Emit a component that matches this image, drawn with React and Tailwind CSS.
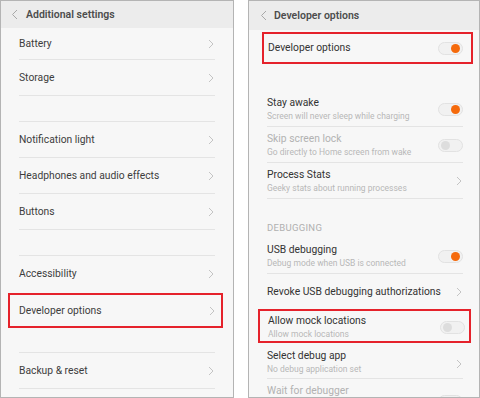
import React from 'react'

const font = { fontFamily: 'Roboto, "Noto Sans", sans-serif' }

const Chevron = ({ className = '' }) => (
    <svg width="6" height="10" viewBox="0 0 6 10" className={className}>
        <path d="M1 1 L5 5 L1 9" fill="none" stroke="#c4c4c4" strokeWidth="1" />
    </svg>
)

const Back = () => (
    <svg width="7" height="11" viewBox="0 0 7 11">
        <path d="M6 1 L1.5 5.5 L6 10" fill="none" stroke="#a8a8a8" strokeWidth="1" />
    </svg>
)

const Toggle = ({ on, className = '' }) => (
    <div className={`w-[25px] h-[13px] rounded-full bg-[#f1f1f1] border border-[#e2e2e2] flex items-center px-[2px] ${className}`}>
        <div className={on ? 'ml-auto w-[9px] h-[9px] rounded-full bg-[#f56a0c]' : 'w-[9px] h-[9px] rounded-full bg-[#dddddd]'}></div>
    </div>
)

const LeftRow = ({ label, h = 'h-[36px]', border = true, top = false }) => (
    <div className={`mx-[18px] flex items-center justify-between ${h} ${border ? 'border-b border-[#e4e4e4]' : ''} ${top ? 'border-t border-[#e4e4e4]' : ''}`}>
        <span className="text-[10.3px] text-[#3d3d3d]">{label}</span>
        <Chevron className="mr-[1px]" />
    </div>
)

const Sub = ({ title, sub, right, dim, border = true, pt = 'pt-[7px]' }) => (
    <div className={`h-[36px] flex justify-between ${pt} ${border ? 'border-b border-[#e4e4e4]' : ''}`}>
        <div className="flex flex-col leading-none">
            <span className={`text-[10.3px] h-[11px] ${dim ? 'text-[#b2b2b2]' : 'text-[#333333]'}`}>{title}</span>
            <span className="text-[8.5px] text-[#b8b8b8] mt-[3px]">{sub}</span>
        </div>
        <div className="self-center -mt-[6px]">{right}</div>
    </div>
)

const LeftPanel = () => (
    <div className="w-[234px] h-[398px] border border-[#b4b4b4] bg-[#f7f7f7] flex flex-col overflow-hidden">
        <div className="h-[27px] bg-[#ececec] flex items-center pl-[10px] gap-[8px]">
            <Back />
            <span className="text-[10.5px] font-semibold text-[#4d4d4d]">Additional settings</span>
        </div>
        <LeftRow label="Battery" h="h-[32px] pt-[1px]" />
        <LeftRow label="Storage" />
        <div className="h-[25px]"></div>
        <LeftRow label="Notification light" h="h-[37px]" top />
        <LeftRow label="Headphones and audio effects" />
        <LeftRow label="Buttons" />
        <div className="h-[25px]"></div>
        <LeftRow label="Accessibility" h="h-[37px]" top border={false} />
        <div className="ml-[7px] mr-[10px] mt-[1px] h-[35px] border-2 border-[#e5222b] flex items-center justify-between pl-[9px] pr-[6px]">
            <span className="text-[10.3px] text-[#3d3d3d]">Developer options</span>
            <Chevron />
        </div>
        <div className="h-[24px]"></div>
        <LeftRow label="Backup & reset" h="h-[37px] pt-[1px]" top />
    </div>
)

const RightPanel = () => (
    <div className="flex-1 h-[398px] border border-[#b4b4b4] bg-[#f7f7f7] flex flex-col overflow-hidden">
        <div className="h-[29px] shrink-0 bg-[#ececec] flex items-center pl-[11px] gap-[7px]">
            <Back />
            <span className="text-[10.5px] font-semibold text-[#4d4d4d]">Developer options</span>
        </div>
        <div className="ml-[13px] mr-[6px] mt-[2px] h-[32px] shrink-0 border-2 border-[#e5222b] flex items-center justify-between pl-[4px] pr-[8px]">
            <span className="text-[10.3px] text-[#333333]">Developer options</span>
            <Toggle on />
        </div>
        <div className="h-[27px] shrink-0"></div>
        <div className="px-[18px] pr-[16px] flex flex-col shrink-0">
            <Sub title="Stay awake" sub="Screen will never sleep while charging" right={<Toggle on />} />
            <Sub title="Skip screen lock" sub="Go directly to Home screen from wake" dim right={<Toggle />} />
            <Sub title="Process Stats" sub="Geeky stats about running processes" right={<Chevron className="mr-[1px]" />} />
            <div className="h-[39px] flex items-end pb-[6px] leading-none">
                <span className="text-[9.5px] tracking-[0.3px] text-[#b0b0b0]">DEBUGGING</span>
            </div>
            <Sub title="USB debugging" sub="Debug mode when USB is connected" right={<Toggle on />} />
            <div className="h-[35px] flex items-center justify-between">
                <span className="text-[10.3px] text-[#333333]">Revoke USB debugging authorizations</span>
                <Chevron className="mr-[1px]" />
            </div>
        </div>
        <div className="ml-[9px] mr-[8px] h-[34px] shrink-0 border-2 border-[#e5222b] flex justify-between pl-[8px] pr-[4px] pt-[5px]">
            <div className="flex flex-col leading-none">
                <span className="text-[10.3px] h-[11px] text-[#333333]">Allow mock locations</span>
                <span className="text-[8.5px] text-[#b8b8b8] mt-[3px]">Allow mock locations</span>
            </div>
            <Toggle className="mt-[5px]" />
        </div>
        <div className="px-[18px] pr-[16px] flex flex-col shrink-0">
            <Sub title="Select debug app" sub="No debug application set" pt="pt-[8px]" right={<Chevron className="mr-[1px] mt-[4px]" />} />
            <div className="h-[30px] flex items-start justify-between pt-[7px] leading-none">
                <span className="text-[10.3px] text-[#b2b2b2]">Wait for debugger</span>
                <Toggle className="mt-[9px]" />
            </div>
        </div>
    </div>
)

const App = () => {
    return (
        <div className="w-[480px] h-[398px] bg-white flex gap-[14px]" style={font}>
            <LeftPanel />
            <RightPanel />
        </div>
    )
}

export default App
